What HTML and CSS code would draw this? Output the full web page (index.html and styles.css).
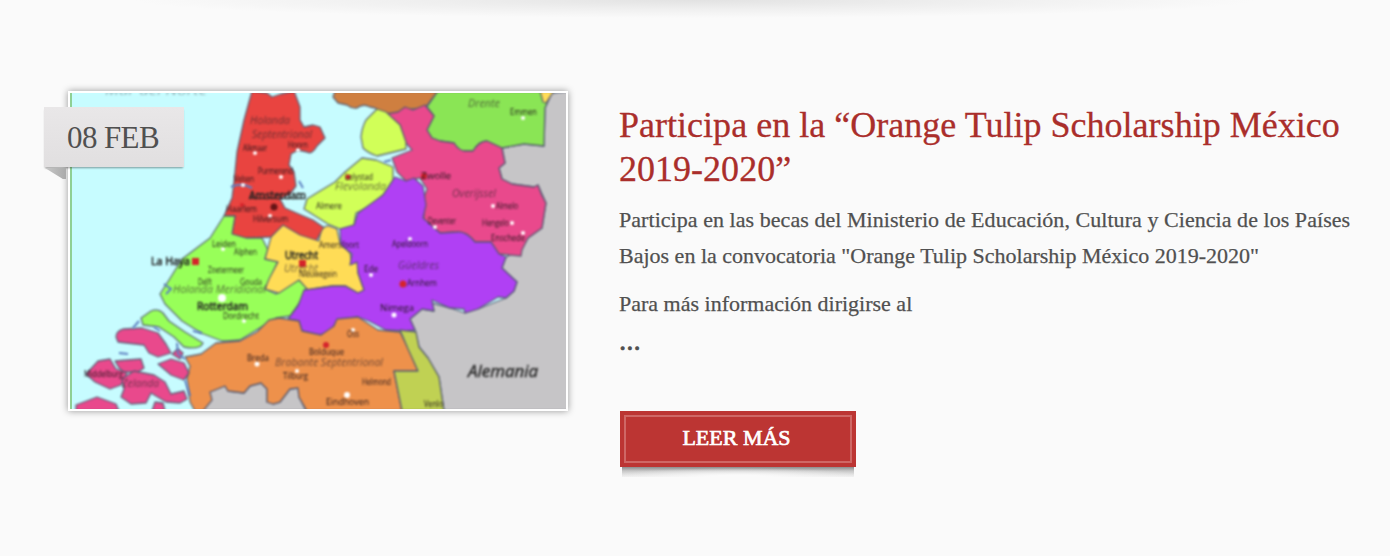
FILE: index.html
```html
<!DOCTYPE html>
<html lang="es">
<head>
<meta charset="utf-8">
<title>Orange Tulip Scholarship México</title>
<link rel="stylesheet" href="styles.css">
</head>
<body>
<div class="top-shadow"></div>
<article class="post">
  <div class="thumb">
    <svg class="map" viewBox="70 93 496 316" role="img" aria-label="Mapa de los Países Bajos">
      <rect class="sea" x="70" y="93" width="496" height="316"/>
      <g class="regions">
        <path class="land" d="M552 93L545 108L544 146L524 144L502 148L505 163L499 168L502 179L512 184L534 187L538 185L546 203L542 228L528 238L522 248L520 251L506 257L502 268L517 282L514 291L506 298L478 309L465 313L450 308L432 303L434 311L422 309L410 319L415 330L419 347L428 358L439 377L444 411L570 411L570 91Z"/>
        <path class="land" d="M196 411L210 392L225 386L228 391L244 393L250 386L261 383L267 389L267 402L273 404L280 402L290 389L298 388L299 397L306 411Z"/>
        <path class="brown" d="M335 91L333 97L338 103L347 105Q352 109 357 108Q363 103 370 107L375 108L388 116L405 110L413 109L425 108L438 91Z"/>
        <path class="green2" d="M438 91L427 107L434 116L427 130L432 138L440 141L454 143Q459 151 465 151L473 151Q479 141 487 141L502 148L524 144L544 146L545 108L552 91Z"/>
        <path class="yellow" d="M540 91L543 102L546 103L554 91Z"/>
        <path class="pink" d="M386 114L398 112L405 107L413 110L425 105L434 116L427 130L432 138L440 141L454 143Q459 151 465 151L473 151Q479 141 487 141L502 148L505 163L499 168L502 179L512 184L534 187L538 185Q541 195 546 203L542 228L528 238L522 250L521 256L499 254L491 242L475 242Q466 231 457 232L440 233L424 220L423 200L427 189L420 178L406 181L397 172L392 158L402 154L412 150L405 142L400 125Z"/>
        <path class="lime" d="M377 109L386 112L400 125L406 142L406 149L398 151L377 156Q368 153 363 148L361 137Q362 127 366 120Z"/>
        <path class="lime" d="M362 158L376 160L393 167L393 180L383 195L370 206L356 213L354 225L340 229L328 224L304 209L307 199L320 191L335 182L345 172Z"/>
        <path class="red" d="M252 91L267 93L272 97L281 94L294 91L300 107L300 120L304 127L313 125L320 127L325 138L317 146Q312 155 307 152L298 150L291 154L289 165L294 172L296 186L290 194L280 199L285 208L301 215L313 220L326 229L320 234L314 245L304 241L298 237L282 228L271 237L246 238L232 234L235 216L224 216L232 198L234 182L237 152L244 120Z"/>
        <path class="green" d="M224 216L235 216L232 234L246 238L262 238L268 250L265 259L278 261L270 279L265 289L276 294L290 284L299 280L307 286L304 296L290 316L276 318L258 329L240 340Q228 341 222 341L201 333L182 321L165 304L160 294L169 280L182 259L210 238Z"/>
        <path class="green" d="M141 318L151 311Q158 308 163 313L169 321L185 332L203 343Q200 350 184 347L174 337L159 327L143 325Z"/>
        <path class="yellow" d="M271 237L283 225L300 235L319 241Q321 225 329 226L337 229L340 243L350 253L352 264L358 262L358 273L364 290L358 293L346 286L332 286L319 288L308 290L299 280L279 293L265 289L269 279L278 262L265 259L268 248Z"/>
        <path class="purple" d="M340 229L354 225L358 213L383 195L395 177L406 181L414 178L423 186L426 205L423 218L440 233L457 232Q466 231 475 242L491 242L499 254L506 257L502 268L517 282L514 291L506 298L498 297L478 309L465 313L464 309L450 308L432 300L434 311L422 309L410 319L415 330L404 331L386 330L369 321L358 317L337 320L330 333L318 335L302 331L299 321L288 319L298 306L304 290L319 288L333 286L345 286L358 293L364 290L358 273L357 262L350 265L352 254L341 245Z"/>
        <path class="orange" d="M185 357L201 354L216 343L240 341L257 332L269 320L279 318L299 321L302 331L321 335L334 326L337 319L358 317L378 330L400 332L409 350L418 371L394 371L402 411L307 411L299 397L298 388L290 389L280 402L273 404L267 402L267 389L261 383L250 386L244 393L228 391L225 386L210 392L212 400L203 411L195 411L190 402L187 379L190 366Z"/>
        <path class="olive" d="M400 330L416 332L419 347L428 358L439 377L444 411L402 411L394 371L418 371L408 349Z"/>
        <path class="pink" d="M116 337Q116 331 123 329L142 328L158 333L166 344L171 353L158 357L149 353L144 345L126 343L118 342Z"/>
        <path class="pink" d="M86 374L98 361L110 359L116 369L127 373L121 385L110 389L95 382Z"/>
        <path class="pink" d="M115 361L127 360L141 359L144 368L138 372L124 372L119 368Z"/>
        <path class="pink" d="M122 379L134 371L154 375L165 382L171 394L184 391L187 399L180 403L166 402L151 393L146 403L131 404L121 397L124 389Z"/>
        <path class="pink" d="M158 364L171 359L184 363L189 373L184 380L171 375Z"/>
        <path class="pink" d="M76 405L97 397L116 404L119 411L76 411Z"/>
        <path class="pink" d="M152 411L155 402L163 403L165 411Z"/>
        <path class="pink" d="M172 354L178 349L183 353L180 359Z"/>
      </g>
      <path class="water" d="M139 321L133 328M154 327L160 331M119 353L128 354M177 343L178 354L185 359M185 380L190 396M164 284L171 289L166 294M193 331L202 333M231 187Q241 182 252 188M299 181L303 188M384 162L391 160"/>
      <rect class="edge" x="70" y="93" width="2" height="316"/>
      <g class="dots">
        <circle cx="255" cy="153" r="2"/><circle cx="281" cy="177" r="2"/><circle cx="270" cy="216" r="2"/><circle cx="243" cy="185" r="2"/><circle cx="298" cy="150" r="2"/>
        <circle cx="523" cy="118" r="2"/><circle cx="493" cy="206" r="2"/><circle cx="512" cy="223" r="2"/><circle cx="435" cy="227" r="2"/><circle cx="523" cy="233" r="2"/>
        <circle cx="410" cy="239" r="2"/><circle cx="222" cy="298" r="4"/><circle cx="244" cy="321" r="2"/><circle cx="257" cy="364" r="2.5"/><circle cx="297" cy="371" r="2"/>
        <circle cx="371" cy="275" r="2"/><circle cx="394" cy="315" r="2.5"/><circle cx="353" cy="330" r="2"/><circle cx="347" cy="395" r="3"/><circle cx="223" cy="249" r="2"/>
      </g>
      <g class="capitals">
        <circle class="amsterdam" cx="274" cy="207" r="3.5"/><rect x="192" y="258" width="7" height="7"/><rect x="299" y="260" width="7" height="7"/>
        <circle cx="403" cy="284" r="3.5"/><circle cx="326" cy="345" r="3"/><circle cx="424" cy="176" r="3"/><circle cx="348" cy="177" r="2.5"/><circle cx="242" cy="205" r="2"/>
      </g>
      <g class="region-names">
        <text class="sea-name" x="105" y="95" textLength="102" lengthAdjust="spacingAndGlyphs">Mar del Norte</text>
        <text x="250" y="124" textLength="40" lengthAdjust="spacingAndGlyphs">Holanda</text>
        <text x="252" y="138" textLength="60" lengthAdjust="spacingAndGlyphs">Septentrional</text>
        <text x="468" y="107" textLength="32" lengthAdjust="spacingAndGlyphs">Drente</text>
        <text x="452" y="197" textLength="44" lengthAdjust="spacingAndGlyphs">Overijssel</text>
        <text x="335" y="190" textLength="51" lengthAdjust="spacingAndGlyphs">Flevolanda</text>
        <text x="284" y="272" textLength="34" lengthAdjust="spacingAndGlyphs">Utrecht</text>
        <text x="173" y="293" textLength="93" lengthAdjust="spacingAndGlyphs">Holanda Meridional</text>
        <text x="398" y="269" textLength="41" lengthAdjust="spacingAndGlyphs">Güeldres</text>
        <text x="275" y="366" textLength="108" lengthAdjust="spacingAndGlyphs">Brabante Septentrional</text>
        <text x="122" y="387" textLength="37" lengthAdjust="spacingAndGlyphs">Zelanda</text>
      </g>
      <g class="towns">
        <text x="243" y="151" textLength="24" lengthAdjust="spacingAndGlyphs">Alkmaar</text>
        <text x="288" y="148" textLength="20" lengthAdjust="spacingAndGlyphs">Hoorn</text>
        <text x="258" y="174" textLength="35" lengthAdjust="spacingAndGlyphs">Purmerend</text>
        <text x="234" y="182" textLength="20" lengthAdjust="spacingAndGlyphs">Velsen</text>
        <text x="226" y="212" textLength="31" lengthAdjust="spacingAndGlyphs">Haarlem</text>
        <text x="253" y="222" textLength="35" lengthAdjust="spacingAndGlyphs">Hilversum</text>
        <text x="212" y="247" textLength="24" lengthAdjust="spacingAndGlyphs">Leiden</text>
        <text x="234" y="255" textLength="23" lengthAdjust="spacingAndGlyphs">Alphen</text>
        <text x="208" y="273" textLength="36" lengthAdjust="spacingAndGlyphs">Zoetermeer</text>
        <text x="198" y="285" textLength="14" lengthAdjust="spacingAndGlyphs">Delft</text>
        <text x="240" y="285" textLength="22" lengthAdjust="spacingAndGlyphs">Gouda</text>
        <text x="223" y="319" textLength="36" lengthAdjust="spacingAndGlyphs">Dordrecht</text>
        <text x="345" y="180" textLength="28" lengthAdjust="spacingAndGlyphs">Lelystad</text>
        <text x="316" y="209" textLength="26" lengthAdjust="spacingAndGlyphs">Almere</text>
        <text x="510" y="115" textLength="27" lengthAdjust="spacingAndGlyphs">Emmen</text>
        <text x="421" y="179" textLength="30" lengthAdjust="spacingAndGlyphs">Zwolle</text>
        <text x="496" y="209" textLength="22" lengthAdjust="spacingAndGlyphs">Almelo</text>
        <text x="482" y="226" textLength="27" lengthAdjust="spacingAndGlyphs">Hengelo</text>
        <text x="428" y="224" textLength="28" lengthAdjust="spacingAndGlyphs">Deventer</text>
        <text x="491" y="241" textLength="34" lengthAdjust="spacingAndGlyphs">Enschede</text>
        <text x="319" y="248" textLength="40" lengthAdjust="spacingAndGlyphs">Amersfoort</text>
        <text x="392" y="247" textLength="36" lengthAdjust="spacingAndGlyphs">Apeldoorn</text>
        <text x="364" y="272" textLength="14" lengthAdjust="spacingAndGlyphs">Ede</text>
        <text x="407" y="286" textLength="30" lengthAdjust="spacingAndGlyphs">Arnhem</text>
        <text x="299" y="277" textLength="38" lengthAdjust="spacingAndGlyphs">Nieuwegein</text>
        <text x="380" y="311" textLength="34" lengthAdjust="spacingAndGlyphs">Nimega</text>
        <text x="347" y="337" textLength="12" lengthAdjust="spacingAndGlyphs">Oss</text>
        <text x="309" y="355" textLength="35" lengthAdjust="spacingAndGlyphs">Bolduque</text>
        <text x="247" y="361" textLength="22" lengthAdjust="spacingAndGlyphs">Breda</text>
        <text x="283" y="379" textLength="25" lengthAdjust="spacingAndGlyphs">Tilburg</text>
        <text x="362" y="385" textLength="29" lengthAdjust="spacingAndGlyphs">Helmond</text>
        <text x="326" y="405" textLength="43" lengthAdjust="spacingAndGlyphs">Eindhoven</text>
        <text x="424" y="407" textLength="19" lengthAdjust="spacingAndGlyphs">Venlo</text>
        <text x="84" y="377" textLength="39" lengthAdjust="spacingAndGlyphs">Middelburg</text>
      </g>
      <g class="cities">
        <text x="249" y="199" textLength="57" lengthAdjust="spacingAndGlyphs">Amsterdam</text>
        <path class="underline" d="M250 198.500H305"/>
        <text x="151" y="265" textLength="39" lengthAdjust="spacingAndGlyphs">La Haya</text>
        <text x="285" y="259" textLength="33" lengthAdjust="spacingAndGlyphs">Utrecht</text>
        <text x="197" y="310" textLength="51" lengthAdjust="spacingAndGlyphs">Rotterdam</text>
      </g>
      <text class="germany" x="468" y="377" textLength="70" lengthAdjust="spacingAndGlyphs">Alemania</text>
    </svg>
    <div class="date">08 FEB</div>
  </div>
  <div class="content">
    <h2 class="title">Participa en la “Orange Tulip Scholarship México<br>2019-2020”</h2>
    <p class="intro"><span class="line-one">Participa en las becas del Ministerio de Educación, Cultura y Ciencia de los Países</span><br>Bajos en la convocatoria "Orange Tulip Scholarship México 2019-2020"</p>
    <p class="info">Para más información dirigirse al</p>
    <div class="ellipsis">...</div>
    <a class="more"><span class="more-label">LEER MÁS</span></a>
  </div>
</article>
</body>
</html>
```
FILE: styles.css
```css
* { box-sizing: border-box; }
body {
  margin: 0;
  height: 556px;
  overflow: hidden;
  background: #fafafa;
  color: #505050;
  font-family: "Liberation Serif", "Times New Roman", serif;
}
.top-shadow {
  height: 18px;
  background: radial-gradient(ellipse 560px 18px at 695px 0, #e2e2e2, #eeeeee 45%, #fafafa);
}
.post {
  display: grid;
  grid-template-columns: 500px 1fr;
  column-gap: 51px;
  padding: 73px 0 0 68px;
}
.thumb {
  position: relative;
  width: 500px;
  height: 320px;
  border: 2px solid #fff;
  box-shadow: 0 0 7px rgba(0, 0, 0, .4);
}
.map { display: block; width: 496px; height: 316px; font-family: "Open Sans", sans-serif; }
.regions { stroke: #50566f; stroke-opacity: .85; stroke-width: 1.3; stroke-linejoin: round; filter: blur(.85px); }
.sea { fill: #c7fcff; }
.land { fill: #c6c5c7; }
.brown { fill: #cf7f40; }
.green { fill: #98ff59; }
.green2 { fill: #8ae555; }
.yellow { fill: #ffdc56; }
.pink { fill: #e9498c; }
.lime { fill: #d1ff58; }
.red { fill: #e94440; }
.purple { fill: #b040f4; }
.orange { fill: #ee914b; }
.olive { fill: #c0d153; }
.edge { fill: #8fd094; }
.water { fill: none; stroke: #5d7fc0; stroke-width: 2; filter: blur(.8px); }
.dots { fill: #fff; filter: blur(.8px); }
.capitals { fill: #d5232b; filter: blur(.8px); }
.amsterdam { fill: #651416; }
.region-names { fill: #33262c; fill-opacity: .65; font-size: 11.5px; font-style: italic; filter: blur(.8px); }
.sea-name { fill-opacity: .35; }
.towns { fill: #20151b; font-size: 8.5px; filter: blur(.8px); }
.cities { fill: #242424; stroke: #242424; stroke-width: .6px; font-size: 11px; filter: blur(.8px); }
.underline { stroke-width: 1; }
.germany { fill: #303030; stroke: #303030; stroke-width: .5px; font-size: 16px; font-style: italic; filter: blur(.8px); }
.date {
  position: absolute;
  top: 14px;
  left: -26px;
  width: 140px;
  height: 60px;
  padding-left: 23px;
  background: linear-gradient(#e9e7e8, #e1dfe0);
  box-shadow: 0 2px 2px -1px rgba(0, 0, 0, .4);
  font-size: 31px;
  line-height: 61px;
  letter-spacing: -.6px;
}
.date::after {
  content: "";
  position: absolute;
  top: 61px;
  left: 1px;
  width: 21px;
  height: 11px;
  background: linear-gradient(90deg, #c8c8c8, #aaa);
  clip-path: polygon(0 0, 100% 0, 100% 100%, 85% 100%);
}
.content { padding-top: 12px; white-space: nowrap; }
.title { margin: 0; color: #aa2e2b; font-size: 36px; font-weight: 400; line-height: 44px; letter-spacing: .02px; -webkit-text-stroke: .3px #aa2e2b; }
.intro, .info { margin: 0; font-size: 22px; line-height: 36px; -webkit-text-stroke: .25px #505050; }
.line-one { letter-spacing: .05px; }
.intro { padding-top: 11px; }
.info { padding-top: 12px; }
.ellipsis { height: 28px; font-size: 29px; line-height: 37px; -webkit-text-stroke: .6px #505050; }
.more {
  position: relative;
  display: block;
  width: 236px;
  height: 56px;
  margin: 61px 0 0 1px;
  padding: 4px;
  background: #bc3533;
  color: #fff;
  font-size: 22px;
  text-align: center;
}
.more-label { display: block; height: 48px; padding-right: 3px; border: 2px solid #cf6765; line-height: 41px; -webkit-text-stroke: .7px #fff; }
.more::after {
  content: "";
  position: absolute;
  left: 2px;
  top: 56px;
  width: 232px;
  height: 10px;
  background: radial-gradient(ellipse 135px 9px at 50% 100%, #fafafa 20%, rgba(250, 250, 250, 0)), linear-gradient(#8c8c8c, #c8c8c8 40%, #f0f0f0);
}
```
